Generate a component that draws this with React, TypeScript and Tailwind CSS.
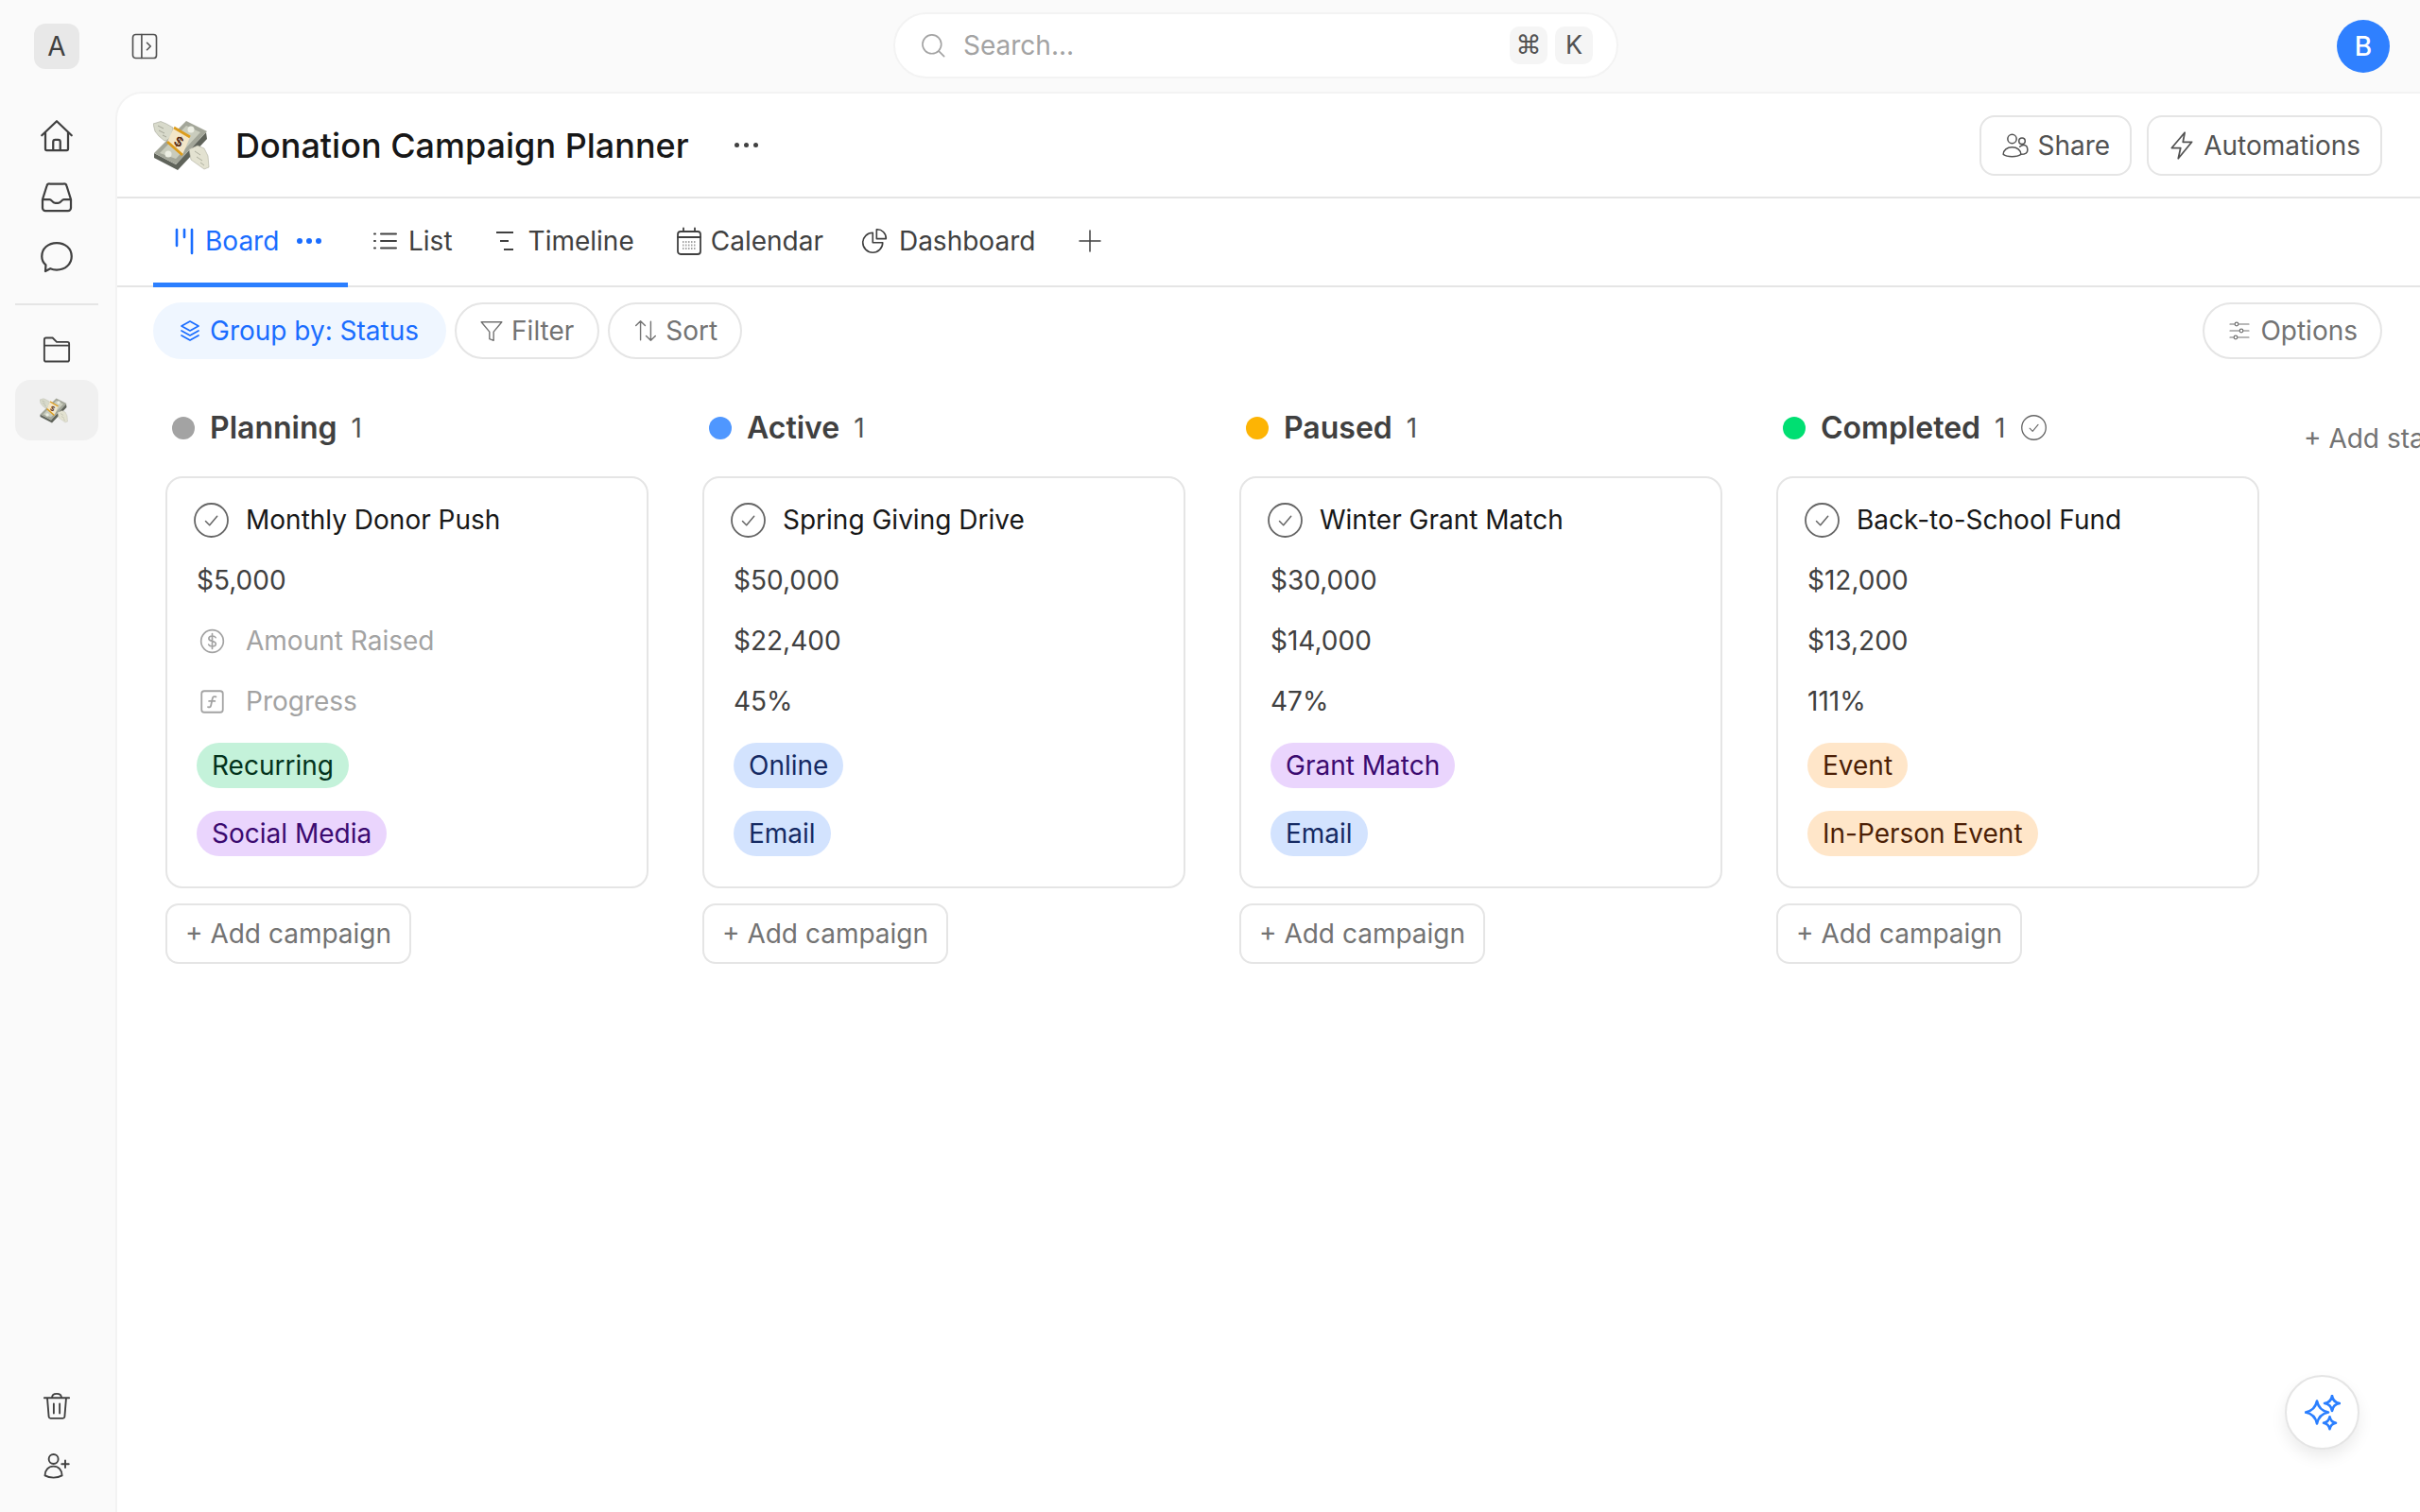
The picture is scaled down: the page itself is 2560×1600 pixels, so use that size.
import type { ReactNode, SVGProps } from "react";

type IconProps = SVGProps<SVGSVGElement> & { size?: number };

function Icon({ size = 24, children, ...rest }: IconProps) {
	return (
		<svg
			width={size}
			height={size}
			viewBox="0 0 24 24"
			fill="none"
			stroke="currentColor"
			strokeWidth={1.6}
			strokeLinecap="round"
			strokeLinejoin="round"
			{...rest}
		>
			{children}
		</svg>
	);
}

function MoneyWings({ width = 60 }: { width?: number }) {
	return (
		<svg width={width} height={(width * 54) / 60} viewBox="0 0 60 54">
			{/* top wing */}
			<path d="M0 4L8 1.5L14 4L21 8L19 20L12 22L6 17L2 12Z" fill="#d8dacb" stroke="#a5a698" strokeWidth="0.6" />
			<path d="M5 6l6 3M6 11l6 3M10 16l4 2" stroke="#a5a698" strokeWidth="1" />
			{/* stack of bills */}
			<path d="M1 35L24 47L56 13L57 20L26 53L1 40Z" fill="#5f635a" />
			<path d="M1 35L35 1L57 12L24 47Z" fill="#a3a699" />
			<path d="M7 35L35 6L50 13L24 41Z" fill="#c9ccbd" />
			<circle cx="40" cy="10" r="3.5" fill="#eceee3" />
			<circle cx="16" cy="36" r="3.5" fill="#eceee3" />
			{/* band */}
			<path d="M22 8L39 18L31 37L15 23Z" fill="#f3e6c8" />
			<path d="M22 8L39 18M15 23L31 37" stroke="#dc9c1c" strokeWidth="2.8" />
			<text x="27" y="28" textAnchor="middle" fontSize="15" fontWeight="700" fill="#5a2d12" fontFamily="Liberation Sans, sans-serif" transform="rotate(30 27 23)">
				$
			</text>
			{/* bottom wing */}
			<path d="M38 31L47 27L54 30L58 38L59 50L54 52L47 47L40 42Z" fill="#e3e2d1" stroke="#aeaf9f" strokeWidth="0.6" />
			<path d="M44 33l6 4M46 39l6 4M50 45l4 3" stroke="#aeaf9f" strokeWidth="1" />
		</svg>
	);
}

function CheckCircle({ size = 37 }: { size?: number }) {
	return (
		<svg width={size} height={size} viewBox="0 0 37 37" fill="none" stroke="#666666" className="shrink-0">
			<circle cx="18.5" cy="18.5" r="17.5" strokeWidth="1.8" />
			<path d="M12.5 19.5l4.2 4.2 8-9.4" strokeWidth="1.5" strokeLinecap="round" strokeLinejoin="round" />
		</svg>
	);
}

function Tab({ icon, label, className }: { icon: ReactNode; label: string; className: string }) {
	return (
		<div className={`flex items-center pb-[3px] text-[#404040] ${className}`}>
			{icon}
			<span>{label}</span>
		</div>
	);
}

function PillButton({ icon, label, active, className }: { icon: ReactNode; label: string; active?: boolean; className: string }) {
	return (
		<div
			className={`flex h-[60px] items-center rounded-full border-2 ${active ? "border-[#eff6ff] bg-[#eff6ff] text-[#1a6dff]" : "border-[#e5e5e5] bg-white text-[#737373]"} ${className}`}
		>
			{icon}
			<span>{label}</span>
		</div>
	);
}

const tagStyles = {
	green: "bg-[#c4f2da] text-[#03331c]",
	purple: "bg-[#ead5fd] text-[#3b0a70]",
	blue: "bg-[#d3e3fe] text-[#152a63]",
	orange: "bg-[#ffe6c9] text-[#4c1f06]",
};

type Tag = { label: string; tone: keyof typeof tagStyles };

type Column = {
	name: string;
	dot: string;
	title: string;
	goal: string;
	raised?: string;
	progress?: string;
	tags: Tag[];
	done?: boolean;
};

const columns: Column[] = [
	{
		name: "Planning",
		dot: "bg-[#a3a3a3]",
		title: "Monthly Donor Push",
		goal: "$5,000",
		tags: [
			{ label: "Recurring", tone: "green" },
			{ label: "Social Media", tone: "purple" },
		],
	},
	{
		name: "Active",
		dot: "bg-[#4f97ff]",
		title: "Spring Giving Drive",
		goal: "$50,000",
		raised: "$22,400",
		progress: "45%",
		tags: [
			{ label: "Online", tone: "blue" },
			{ label: "Email", tone: "blue" },
		],
	},
	{
		name: "Paused",
		dot: "bg-[#fdb404]",
		title: "Winter Grant Match",
		goal: "$30,000",
		raised: "$14,000",
		progress: "47%",
		tags: [
			{ label: "Grant Match", tone: "purple" },
			{ label: "Email", tone: "blue" },
		],
	},
	{
		name: "Completed",
		dot: "bg-[#00df72]",
		title: "Back-to-School Fund",
		goal: "$12,000",
		raised: "$13,200",
		progress: "111%",
		done: true,
		tags: [
			{ label: "Event", tone: "orange" },
			{ label: "In-Person Event", tone: "orange" },
		],
	},
];

function BoardColumn({ column }: { column: Column }) {
	return (
		<div className="flex w-[511px] shrink-0 flex-col">
			<div className="flex h-[60px] items-center pl-[7px] pt-[3px]">
				<span className={`h-[24px] w-[24px] rounded-full ${column.dot}`} />
				<span className="ml-[16px] text-[32px] font-semibold text-[#404040]">{column.name}</span>
				<span className="ml-[15px] text-[28px] text-[#525252]">1</span>
				{column.done && (
					<span className="ml-[17px]">
						<CheckCircle size={27} />
					</span>
				)}
			</div>
			<div className="mt-[23px] flex h-[436px] flex-col rounded-[18px] border-2 border-[#e5e5e5] bg-white pl-[31px] pt-[12px] text-[28px] text-[#404040]">
				<div className="-ml-[3px] flex h-[64px] items-center gap-[18px] text-[#171717]">
					<CheckCircle />
					<span>{column.title}</span>
				</div>
				<div className="flex h-[64px] items-center">{column.goal}</div>
				{column.raised ? (
					<div className="flex h-[64px] items-center">{column.raised}</div>
				) : (
					<div className="flex h-[64px] items-center gap-[22px] pl-[3px] text-[#a3a3a3]">
						<Icon size={27} strokeWidth={1.5}>
							<circle cx="12" cy="12" r="10.5" />
							<path d="M15.2 8.6c-.6-1-1.7-1.5-3.2-1.5-1.9 0-3.2.9-3.2 2.4 0 3.4 6.6 1.6 6.6 5 0 1.5-1.4 2.4-3.4 2.4-1.6 0-2.8-.6-3.4-1.7M12 5v14" />
						</Icon>
						<span>Amount Raised</span>
					</div>
				)}
				{column.progress ? (
					<div className="flex h-[64px] items-center">{column.progress}</div>
				) : (
					<div className="flex h-[64px] items-center gap-[22px] pl-[3px] text-[#a3a3a3]">
						<Icon size={27} strokeWidth={1.6}>
							<rect x="2" y="2" width="20" height="20" rx="2.5" />
							<path d="M15.5 7.5c-1.8-.8-3 0-3.3 1.6l-1.4 6.4c-.3 1.5-1.3 2-2.8 1.5M9 11.5h5.5" />
						</Icon>
						<span>Progress</span>
					</div>
				)}
				<div className="mt-[12px] flex flex-col items-start gap-[24px]">
					{column.tags.map((tag) => (
						<span key={tag.label} className={`flex h-[48px] items-center rounded-full px-[16px] ${tagStyles[tag.tone]}`}>
							{tag.label}
						</span>
					))}
				</div>
			</div>
			<div className="mt-[16px] flex h-[64px] w-fit items-center rounded-[14px] border-2 border-[#e5e5e5] bg-white px-[19px] text-[28px] text-[#737373]">
				+ Add campaign
			</div>
		</div>
	);
}

export default function App() {
	return (
		<div className="flex h-[1600px] w-[2560px] flex-col overflow-hidden bg-[#fafafa] font-['Inter',sans-serif]">
			{/* Top bar */}
			<div className="relative flex h-[97px] shrink-0 items-center pl-[36px] pr-[32px]">
				<div className="flex h-[48px] w-[48px] items-center justify-center rounded-[12px] bg-[#e8e8e8] text-[28px] text-[#404040]">A</div>
				<div className="ml-[54px] text-[#525252]">
					<Icon size={30} strokeWidth={1.3}>
						<rect x="2" y="2" width="20" height="20" rx="2.5" />
						<path d="M9.5 2v20M14 9l3 3-3 3" />
					</Icon>
				</div>
				<div className="absolute left-[945px] top-[13px] flex h-[70px] w-[767px] items-center rounded-full border-2 border-[#f3f3f3] bg-white pl-[26px] pr-[25px] text-[28px] text-[#a3a3a3]">
					<Icon size={28} strokeWidth={1.4}>
						<circle cx="11" cy="11" r="8.5" />
						<path d="M17.5 17.5L22 22" />
					</Icon>
					<span className="ml-[18px]">Search...</span>
					<div className="ml-auto flex gap-[8px] text-[#525252]">
						<span className="flex h-[40px] w-[40px] items-center justify-center rounded-[10px] bg-[#f5f5f5] font-['DejaVu_Sans',sans-serif] text-[27px]">⌘</span>
						<span className="flex h-[40px] w-[40px] items-center justify-center rounded-[10px] bg-[#f5f5f5] text-[27px]">K</span>
					</div>
				</div>
				<div className="ml-auto flex h-[56px] w-[56px] items-center justify-center rounded-full bg-[#2f80ff] text-[28px] font-medium text-white">B</div>
			</div>

			<div className="flex min-h-0 flex-1">
				{/* Sidebar */}
				<div className="flex w-[122px] shrink-0 flex-col items-center pr-[2px] text-[#404040]">
					<div className="mt-[29px] flex flex-col items-center gap-[28px]">
						<Icon size={36} strokeWidth={1.5}>
							<path d="M1.5 11.5L12 1.5l10.5 10M4 9.5V21a1 1 0 0 0 1 1h14a1 1 0 0 0 1-1V9.5M9.5 22v-6a1.5 1.5 0 0 1 1.5-1.5h2a1.5 1.5 0 0 1 1.5 1.5v6" />
						</Icon>
						<Icon size={36} strokeWidth={1.5}>
							<path d="M2 14L5 4.5A2 2 0 0 1 7 3h10a2 2 0 0 1 2 1.5L22 14v6a2 2 0 0 1-2 2H4a2 2 0 0 1-2-2zM2 14h5c1.5 0 1.8 2.5 4 2.5h2c2.2 0 2.5-2.5 4-2.5h5" />
						</Icon>
						<Icon size={36} strokeWidth={1.5}>
							<path d="M12 2c6 0 10.5 4 10.5 9.5S18 21 12 21c-1.6 0-3-.2-4.500-.9L4 22l.3-4.400C2.500 16 1.500 13.800 1.500 11.500 1.500 6 6 2 12 2z" />
						</Icon>
					</div>
					<div className="mt-[31px] h-[2px] w-[88px] bg-[#e5e5e5]" />
					<div className="mt-[32px] text-[#404040]">
						<Icon size={30} strokeWidth={1.5}>
							<path d="M1.5 20.5v-17A1.5 1.5 0 0 1 3 2h5.5l3.5 3.5h9A1.5 1.5 0 0 1 22.5 7v13.500A1.5 1.5 0 0 1 21 22H3a1.5 1.5 0 0 1-1.5-1.5zM1.5 8.5h21" />
						</Icon>
					</div>
					<div className="mt-[17px] flex h-[64px] w-[88px] items-center justify-center rounded-[16px] bg-[#f0f0f0] pr-[6px]">
						<MoneyWings width={30} />
					</div>
					<div className="mb-[33px] mt-auto flex flex-col items-center gap-[34px]">
						<Icon size={30} strokeWidth={1.5}>
							<path d="M1.5 5h21M4 5l1.3 16a1.5 1.5 0 0 0 1.5 1.3h10.400a1.5 1.5 0 0 0 1.5-1.3L20 5M8 5c0-2.5 1.5-3.5 4-3.500s4 1 4 3.500M9.500 10v8M14.500 10v8" />
						</Icon>
						<Icon size={30} strokeWidth={1.5}>
							<circle cx="9.3" cy="5.6" r="4" />
							<path d="M2 19.500c0-4.500 3-7.800 7.300-7.800s7.200 3.300 7.200 7.800c-2 1.200-4.500 1.800-7.200 1.800S4 20.700 2 19.500zM19.200 6.800v6M16.200 9.800h6" />
						</Icon>
					</div>
				</div>

				{/* Main panel */}
				<div className="relative flex min-w-0 flex-1 flex-col rounded-tl-[28px] border-l-2 border-t-2 border-[#f3f3f3] bg-white">
					<div className="flex h-[111px] shrink-0 items-center border-b-2 border-[#e5e5e5] pl-[38px] pr-[40px]">
						<MoneyWings />
						<h1 className="ml-[27px] text-[36px] font-medium leading-none text-[#171717]">Donation Campaign Planner</h1>
						<div className="ml-[48px] flex gap-[5px]">
							<span className="h-[5px] w-[5px] rounded-full bg-[#404040]" />
							<span className="h-[5px] w-[5px] rounded-full bg-[#404040]" />
							<span className="h-[5px] w-[5px] rounded-full bg-[#404040]" />
						</div>
						<div className="ml-auto flex gap-[16px] text-[28px] text-[#525252]">
							<div className="flex h-[64px] items-center gap-[9px] rounded-[16px] border-2 border-[#e5e5e5] pl-[22px] pr-[21px]">
								<Icon size={28} strokeWidth={1.3}>
									<circle cx="9" cy="6" r="4" />
									<circle cx="18" cy="8" r="2.8" />
									<path d="M1 20c0-4 3.5-6.500 8-6.500s8 2.500 8 6.500c-2 1.500-5 2-8 2s-6-.5-8-2zM16 13c1-1 2-1.500 3.500-1.500 2 0 3.500 1.500 3.500 4.500 0 3-2 4-6 4" />
								</Icon>
								<span>Share</span>
							</div>
							<div className="flex h-[64px] items-center gap-[8px] rounded-[16px] border-2 border-[#e5e5e5] pl-[20px] pr-[21px]">
								<Icon size={30} strokeWidth={1.4}>
									<path d="M14.5 1L3.5 14h7.500l-2 9 11.500-14h-7.500z" />
								</Icon>
								<span>Automations</span>
							</div>
						</div>
					</div>

					<div className="flex h-[94px] shrink-0 items-stretch gap-[45px] border-b-2 border-[#e5e5e5] pl-[38px] text-[28px]">
						<div className="-mb-[2px] flex w-[206px] items-center border-b-[5px] border-[#2b7fff] pl-[23px] text-[#1a6dff]">
							<svg width="20" height="30" viewBox="0 0 20 30" fill="none" stroke="currentColor" strokeWidth="2.6" strokeLinecap="round">
								<path d="M2 3v17M10 3v8M18 3v25" />
							</svg>
							<span className="ml-[12px]">Board</span>
							<div className="ml-[19px] flex gap-[4px]">
								<span className="h-[6px] w-[6px] rounded-full bg-[#1a6dff]" />
								<span className="h-[6px] w-[6px] rounded-full bg-[#1a6dff]" />
								<span className="h-[6px] w-[6px] rounded-full bg-[#1a6dff]" />
							</div>
						</div>
						<Tab
							className="-ml-[18px] gap-[12px]"
							label="List"
							icon={
								<svg width="25" height="20" viewBox="0 0 25 20" fill="none" stroke="currentColor" strokeWidth="2" strokeLinecap="round">
									<path d="M8 2.5h16M8 10h16M8 17.500h16M1 2.500h1M1 10h1M1 17.500h1" />
								</svg>
							}
						/>
						<Tab
							className="gap-[15px]"
							label="Timeline"
							icon={
								<svg width="20" height="24" viewBox="0 0 20 24" fill="none" stroke="currentColor" strokeWidth="2.2">
									<path d="M1 3h18M5 12h9M9 21h10" />
								</svg>
							}
						/>
						<Tab
							className="gap-[10px]"
							label="Calendar"
							icon={
								<svg width="26" height="30" viewBox="0 0 26 30" fill="none" stroke="currentColor" strokeWidth="1.8" strokeLinecap="round">
									<rect x="1" y="5" width="24" height="24" rx="3" />
									<path d="M1 11h24M7 1.5V5M19 1.5V5" />
									<path d="M6 16h14M6 19.500h14M6 23h14" strokeWidth="2" strokeDasharray="1.5 1.5" strokeLinecap="butt" stroke="#a3a3a3" />
								</svg>
							}
						/>
						<Tab
							className="-ml-[5px] gap-[12px]"
							label="Dashboard"
							icon={
								<Icon size={28} strokeWidth={1.4}>
									<path d="M10.5 4.500a9 9 0 1 0 9 9h-9z" />
									<path d="M14 1.500a8 8 0 0 1 8.500 8.500H14z" />
								</Icon>
							}
						/>
						<div className="ml-[1px] flex items-center pb-[3px] text-[#404040]">
							<Icon size={24} strokeWidth={1.5}>
								<path d="M12 1v22M1 12h22" />
							</Icon>
						</div>
					</div>

					<div className="flex shrink-0 items-center gap-[9px] pl-[38px] pr-[40px] pt-[16px] text-[28px]">
						<PillButton
							active
							className="gap-[9px] pl-[25px] pr-[27px]"
							label="Group by: Status"
							icon={
								<Icon size={24} strokeWidth={1.7}>
									<path d="M12 2l9 5-9 5-9-5zM3 12l9 5 9-5M3 17l9 5 9-5" />
								</Icon>
							}
						/>
						<PillButton
							className="gap-[8px] pl-[24px] pr-[25px]"
							label="Filter"
							icon={
								<Icon size={26} strokeWidth={1.3}>
									<path d="M2 3.500h20L14 13v8.500l-4-1.500v-7z" />
								</Icon>
							}
						/>
						<PillButton
							className="gap-[8px] pl-[25px] pr-[24px]"
							label="Sort"
							icon={
								<Icon size={26} strokeWidth={1.3}>
									<path d="M7 21V2.500M2.500 7L7 2.500 11.500 7M17 3v18.500M12.500 17l4.500 4.500 4.500-4.500" />
								</Icon>
							}
						/>
						<PillButton
							className="ml-auto gap-[10px] pl-[25px] pr-[24px]"
							label="Options"
							icon={
								<Icon size={24} strokeWidth={1.2}>
									<path d="M2 5h5M11 5h11M2 12h10M16 12h6M2 19h4M10 19h12" />
									<circle cx="9" cy="5" r="1.8" />
									<circle cx="14" cy="12" r="1.8" />
									<circle cx="8" cy="19" r="1.8" />
								</Icon>
							}
						/>
					</div>

					{/* Board */}
					<div className="flex min-h-0 flex-1 items-start gap-[57px] overflow-hidden pl-[51px] pt-[41px]">
						{columns.map((column) => (
							<BoardColumn key={column.name} column={column} />
						))}
						<div className="-ml-[10px] shrink-0 whitespace-nowrap pt-[20px] text-[28px] leading-[46px] text-[#737373]">+ Add status</div>
					</div>

					{/* Ask button */}
					<div className="absolute bottom-[66px] right-[64px] flex h-[79px] w-[79px] items-center justify-center rounded-full border-2 border-[#e5e5e5] bg-white text-[#2b7fff] shadow-[0_8px_16px_rgba(0,0,0,0.08)]">
						<svg width="38" height="38" viewBox="-1 -1 38 38" fill="none" stroke="currentColor" strokeWidth="2.6" strokeLinejoin="round">
							<path d="M12 5.500Q14 15.500 24 17.500Q14 19.500 12 29.500Q10 19.500 0 17.500Q10 15.500 12 5.500Z" />
							<path d="M28 0Q29 7 36 8Q29 9 28 16Q27 9 20 8Q27 7 28 0Z" />
							<path d="M25.500 22.200Q26.500 27.700 32 28.700Q26.500 29.700 25.500 35.200Q24.500 29.700 19 28.700Q24.500 27.700 25.500 22.200Z" />
						</svg>
					</div>
				</div>
			</div>
		</div>
	);
}
